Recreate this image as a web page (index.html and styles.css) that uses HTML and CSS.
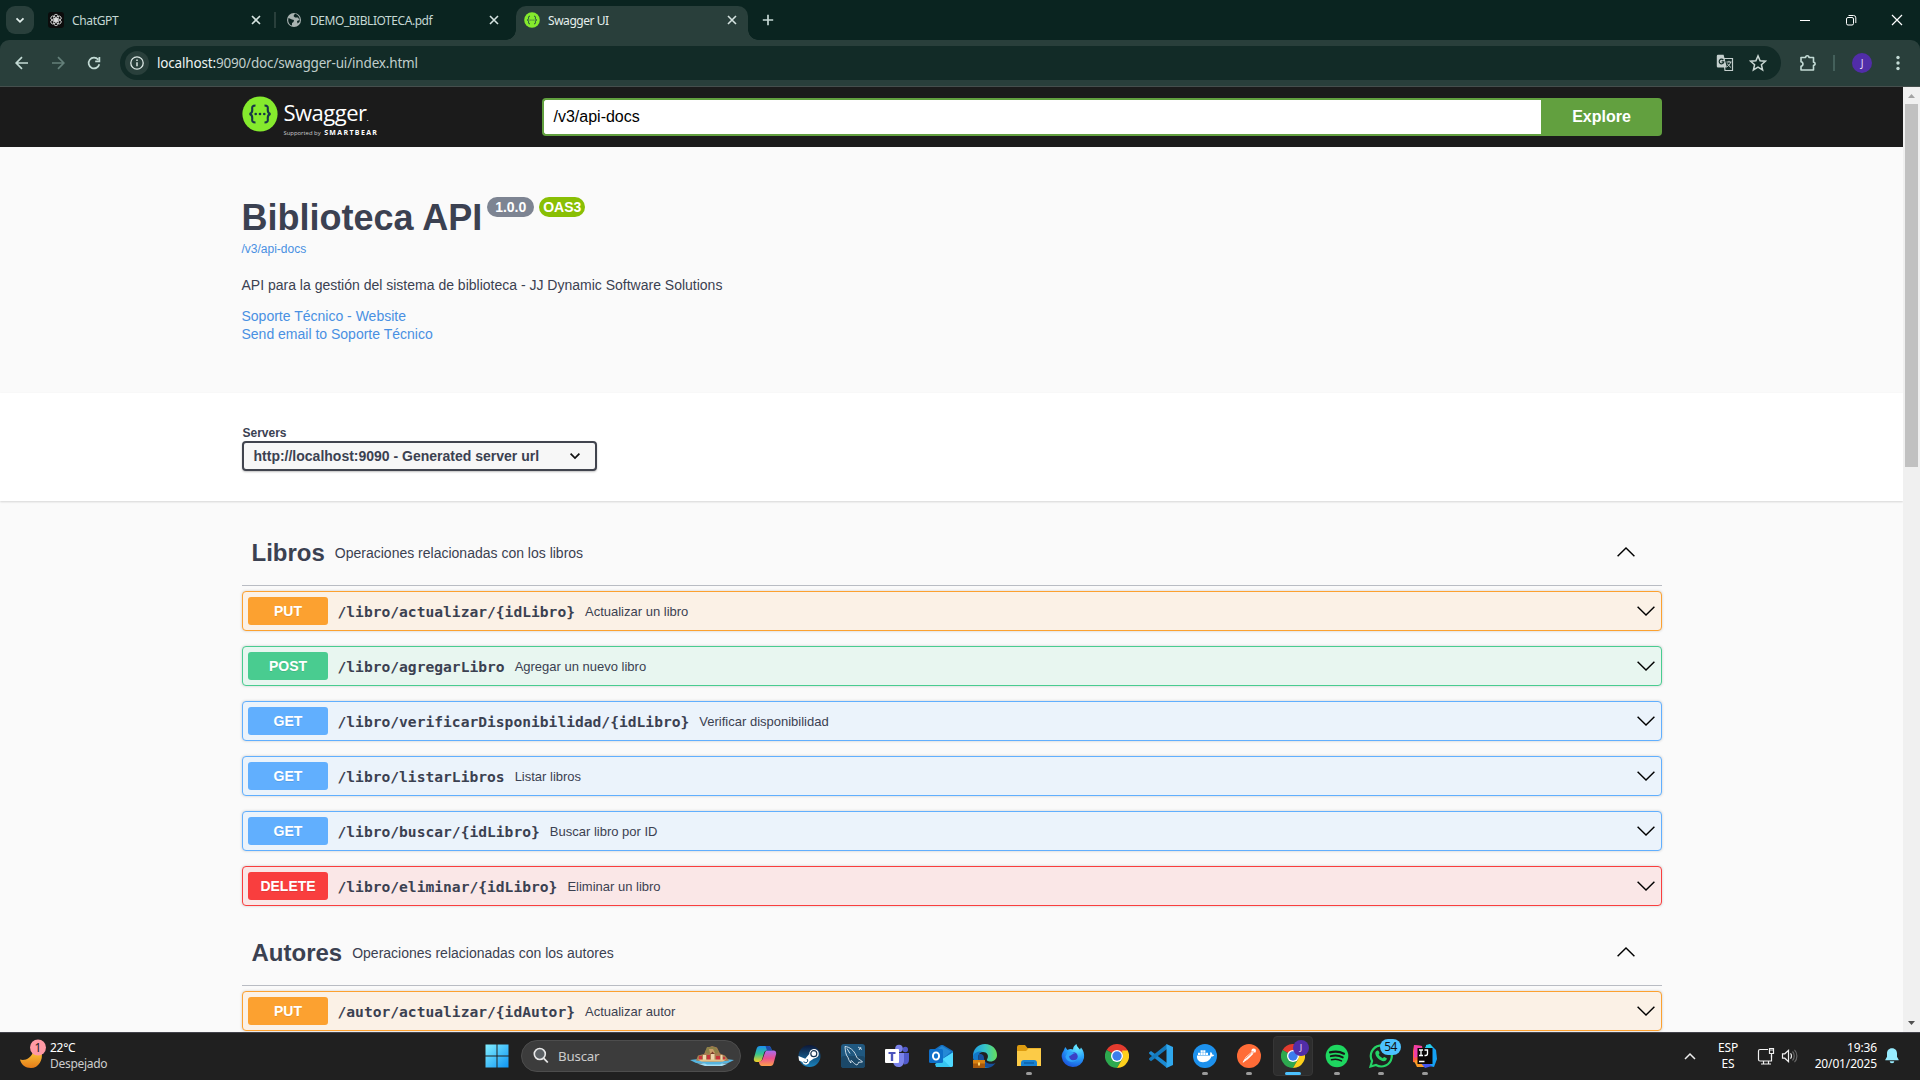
FILE: index.html
```html
<!DOCTYPE html>
<html lang="es">
<head>
<meta charset="utf-8">
<title>Swagger UI</title>
<link rel="stylesheet" href="styles.css">
</head>
<body>
<svg width="0" height="0" class="defs" aria-hidden="true">
  <defs>
    <symbol id="x" viewBox="0 0 10 10"><path d="M1 1l8 8M9 1l-8 8" stroke="currentColor" stroke-width="1.6" fill="none"/></symbol>
    <symbol id="down" viewBox="0 0 20 20"><path d="M1.600 5.800L10 14l8.400-8.200" stroke="#000" stroke-width="1.450" fill="none"/></symbol>
    <symbol id="up" viewBox="0 0 20 20"><path d="M1.600 14.200L10 6l8.400 8.200" stroke="#000" stroke-width="1.450" fill="none"/></symbol>
    <symbol id="swagger" viewBox="0 0 36 36">
      <circle cx="18" cy="18" r="17.600" fill="#85ea2d"/>
      <path d="M13.500 9.500c-3 0-3.500 1-3.300 3.500.3 3-.2 4.500-2.700 5 2.500.5 3 2 2.700 5-.2 2.500.3 3.500 3.300 3.500M22.500 9.500c3 0 3.500 1 3.300 3.500-.3 3 .2 4.500 2.700 5-2.500.5-3 2-2.700 5 .2 2.500-.3 3.500-3.300 3.500" fill="none" stroke="#173647" stroke-width="2.100"/>
      <g fill="#173647"><circle cx="13.700" cy="18" r="1.300"/><circle cx="18" cy="18" r="1.300"/><circle cx="22.300" cy="18" r="1.300"/></g>
    </symbol>
    <symbol id="chrome" viewBox="0 0 24 24">
      <path d="M12 12L1.600 6A12 12 0 0 1 22.400 6z" fill="#e33b2e"/>
      <path d="M1.600 6A12 12 0 0 0 12 24l5.200-9L12 12z" fill="#2da94f"/>
      <path d="M22.400 6A12 12 0 0 1 12 24l5.200-9V6z" fill="#fdd01c"/>
      <path d="M12 6.500h10.600L22.400 6 12 5z" fill="#e33b2e"/>
      <circle cx="12" cy="12" r="6" fill="#fff"/><circle cx="12" cy="12" r="4.700" fill="#3b7ded"/>
    </symbol>
  </defs>
</svg>

<header class="browser">
  <div class="tabstrip">
    <button class="tab-search"><svg width="10" height="10" viewBox="0 0 10 10"><path d="M1.500 3.300L5 6.800l3.500-3.500" stroke="#e2efec" stroke-width="1.800" fill="none"/></svg></button>
    <div class="tab tab-first">
      <svg class="favicon" viewBox="0 0 16 16"><rect width="16" height="16" rx="3" fill="#0c0c0c"/><g fill="none" stroke="#e8e8e8" stroke-width=".8"><ellipse cx="8" cy="5.600" rx="2.300" ry="3.400"/><ellipse cx="8" cy="5.600" rx="2.300" ry="3.400" transform="rotate(60 8 8)"/><ellipse cx="8" cy="5.600" rx="2.300" ry="3.400" transform="rotate(120 8 8)"/><ellipse cx="8" cy="5.600" rx="2.300" ry="3.400" transform="rotate(180 8 8)"/><ellipse cx="8" cy="5.600" rx="2.300" ry="3.400" transform="rotate(240 8 8)"/><ellipse cx="8" cy="5.600" rx="2.300" ry="3.400" transform="rotate(300 8 8)"/></g></svg>
      <span class="tab-title t1">ChatGPT</span>
      <svg class="close" width="10" height="10"><use href="#x"/></svg>
    </div>
    <div class="tab tab-second">
      <svg class="favicon" viewBox="0 0 16 16"><circle cx="8" cy="8" r="7" fill="#a9b3b1"/><path d="M2.500 6l3.500 1.500 2 .5-.5 2-1.500 1v2.500C3.500 13 1.500 10 2.500 6zM9 1.600L7.500 4l1.500 1.500h3L13.500 8 11 9l.5 2.500 2-1.500c1-3-.5-7-4.500-8.400z" fill="#0c2421"/></svg>
      <span class="tab-title t2">DEMO_BIBLIOTECA.pdf</span>
      <svg class="close" width="10" height="10"><use href="#x"/></svg>
    </div>
    <div class="tab active">
      <svg class="favicon"><use href="#swagger"/></svg>
      <span class="tab-title t3">Swagger UI</span>
      <svg class="close" width="10" height="10"><use href="#x"/></svg>
    </div>
    <svg class="new-tab" width="12" height="12" viewBox="0 0 12 12"><path d="M6 .8v10.400M.8 6h10.400" stroke="#c5d8d4" stroke-width="1.700"/></svg>
    <div class="window-controls">
      <svg width="12" height="12" viewBox="0 0 12 12"><path d="M1 6.500h10" stroke="#fff"/></svg>
      <svg width="12" height="12" viewBox="0 0 12 12"><g fill="none" stroke="#fff"><rect x="1.500" y="3.500" width="7" height="7.500" rx="1.500"/><path d="M3.500 1.500H8.500a2.300 2.300 0 0 1 2.300 2.300V9"/></g></svg>
      <svg width="12" height="12" viewBox="0 0 12 12"><path d="M1 1l10 10M11 1L1 11" stroke="#fff" stroke-width="1.200"/></svg>
    </div>
  </div>
  <div class="toolbar">
    <nav class="nav-buttons">
      <svg width="16" height="16" viewBox="0 0 16 16"><path d="M14 8H2.500M8 2.200L2.200 8 8 13.800" stroke="#c3dbd5" stroke-width="1.700" fill="none"/></svg>
      <svg width="16" height="16" viewBox="0 0 16 16"><path d="M2 8h11.500M8 2.200L13.800 8 8 13.800" stroke="#64807a" stroke-width="1.700" fill="none"/></svg>
      <svg width="16" height="16" viewBox="0 0 16 16"><path d="M13.300 9.200A5.400 5.400 0 1 1 12.200 4.600M13.400 2v4.300H9.200" stroke="#c3dbd5" stroke-width="1.700" fill="none"/></svg>
    </nav>
    <div class="omnibox">
      <span class="site-info"><svg width="16" height="16" viewBox="0 0 16 16"><circle cx="8" cy="8" r="6.200" fill="none" stroke="#dce8e5" stroke-width="1.300"/><path d="M8 7.200v4M8 4.600v1.400" stroke="#dce8e5" stroke-width="1.500"/></svg></span>
      <span class="url"><b>localhost:</b>9090/doc/swagger-ui/index.html</span>
      <svg class="translate" width="18" height="18" viewBox="0 0 18 18"><path d="M7.500 4.500h9v12H9z" fill="none" stroke="#c4cfcd" stroke-width="1.200"/><path d="M2 .8h5.600l3.300 12.600H2A1.200 1.200 0 0 1 .8 12.200V2A1.200 1.200 0 0 1 2 .8z" fill="#c4cfcd"/><path d="M7.300 6A2.300 2.300 0 1 0 7.800 7.800H5.600" fill="none" stroke="#122b27" stroke-width="1.200"/><path d="M10.500 8h5M13 6.800V8M14.700 8c-.5 2.300-2 3.700-3.500 4.700M11.300 9.500c.8 1.500 2 2.800 3.700 4" fill="none" stroke="#c4cfcd" stroke-width="1"/></svg>
      <svg width="18" height="18" viewBox="0 0 18 18"><path d="M9 1.900l2.100 4.900 5.300.4-4 3.500 1.200 5.200L9 13.100l-4.600 2.800 1.200-5.200-4-3.500 5.300-.4z" fill="none" stroke="#c9d6d3" stroke-width="1.500"/></svg>
    </div>
    <svg class="extensions" width="18" height="18" viewBox="0 0 18 18"><path d="M2 3.500h4.600a1.700 1.700 0 0 1 3.400 0h4.500v4.700a1.600 1.600 0 0 1 0 3.200V16H2v-3.600c2.600-.4 2.600-4.200 0-4.600z" fill="none" stroke="#c3dbd5" stroke-width="1.600" stroke-linejoin="round"/></svg>
    <i class="tool-sep"></i>
    <span class="avatar">J</span>
    <svg class="dots" width="4" height="16" viewBox="0 0 4 16"><g fill="#c3dbd5"><circle cx="2" cy="2.500" r="1.700"/><circle cx="2" cy="8" r="1.700"/><circle cx="2" cy="13.500" r="1.700"/></g></svg>
  </div>
</header>

<div class="viewport">
  <main class="page">
    <div class="topbar"><div class="wrapper">
      <div class="logo">
        <svg width="36" height="36"><use href="#swagger"/></svg>
        <div class="logo-text"><span class="brand">Swagger<small>.</small></span><span class="support">Supported by <b>SMARTBEAR</b></span></div>
      </div>
      <div class="download"><div class="download-input">/v3/api-docs</div><div class="explore">Explore</div></div>
    </div></div>

    <section class="info wrapper">
      <h2><span class="title">Biblioteca API</span><span class="badge version">1.0.0</span><span class="badge oas">OAS3</span></h2>
      <a class="spec">/v3/api-docs</a>
      <p>API para la gestión del sistema de biblioteca - JJ Dynamic Software Solutions</p>
      <div class="contact"><a>Soporte Técnico - Website</a><a>Send email to Soporte Técnico</a></div>
    </section>

    <section class="scheme"><div class="wrapper">
      <label>Servers</label>
      <div class="select"><span>http://localhost:9090 - Generated server url</span><svg width="12" height="12" viewBox="0 0 12 12"><path d="M1.600 3.700L6 8.100l4.400-4.400" stroke="#111" stroke-width="1.700" fill="none"/></svg></div>
    </div></section>

    <section class="operations wrapper">
      <div class="tag"><h3>Libros</h3><span>Operaciones relacionadas con los libros</span><svg width="20" height="20"><use href="#up"/></svg></div>
      <div class="op put"><b class="method">PUT</b><span class="path">/libro/actualizar/{idLibro}</span><span class="desc">Actualizar un libro</span><svg width="20" height="20"><use href="#down"/></svg></div>
      <div class="op post"><b class="method">POST</b><span class="path">/libro/agregarLibro</span><span class="desc">Agregar un nuevo libro</span><svg width="20" height="20"><use href="#down"/></svg></div>
      <div class="op get"><b class="method">GET</b><span class="path">/libro/verificarDisponibilidad/{idLibro}</span><span class="desc">Verificar disponibilidad</span><svg width="20" height="20"><use href="#down"/></svg></div>
      <div class="op get"><b class="method">GET</b><span class="path">/libro/listarLibros</span><span class="desc">Listar libros</span><svg width="20" height="20"><use href="#down"/></svg></div>
      <div class="op get"><b class="method">GET</b><span class="path">/libro/buscar/{idLibro}</span><span class="desc">Buscar libro por ID</span><svg width="20" height="20"><use href="#down"/></svg></div>
      <div class="op delete"><b class="method">DELETE</b><span class="path">/libro/eliminar/{idLibro}</span><span class="desc">Eliminar un libro</span><svg width="20" height="20"><use href="#down"/></svg></div>
      <div class="tag"><h3>Autores</h3><span>Operaciones relacionadas con los autores</span><svg width="20" height="20"><use href="#up"/></svg></div>
      <div class="op put"><b class="method">PUT</b><span class="path">/autor/actualizar/{idAutor}</span><span class="desc">Actualizar autor</span><svg width="20" height="20"><use href="#down"/></svg></div>
    </section>
  </main>
  <div class="scrollbar">
    <svg width="17" height="17" viewBox="0 0 17 17"><path d="M5 11l3.500-4 3.500 4z" fill="#a3a3a3"/></svg>
    <div class="thumb"></div>
    <svg class="arrow-down" width="17" height="17" viewBox="0 0 17 17"><path d="M5 6h7l-3.500 4z" fill="#505050"/></svg>
  </div>
</div>

<footer class="taskbar">
  <div class="weather">
    <svg width="30" height="32" viewBox="0 0 30 32"><defs><linearGradient id="moon" x1="0" y1="0" x2="0" y2="1"><stop offset="0" stop-color="#fbc53b"/><stop offset="1" stop-color="#e57c18"/></linearGradient></defs><path d="M4 20.500c5 1.500 11-1 13.500-8.500l8 1c2 8-3 16-10.500 16-5.500 0-10-3.500-11-8.500z" fill="url(#moon)"/><circle cx="22" cy="8.500" r="8" fill="#ff9aa5"/><text x="22" y="13" text-anchor="middle" class="badge-num">1</text></svg>
    <div><span>22°C</span><span class="dim">Despejado</span></div>
  </div>
  <div class="apps">
    <svg class="start" width="24" height="24" viewBox="0 0 24 24"><defs><linearGradient id="win" gradientUnits="userSpaceOnUse" x1="0" y1="0" x2="24" y2="24"><stop offset="0" stop-color="#84f0ff"/><stop offset="1" stop-color="#0b93f5"/></linearGradient></defs><path d="M.5.500h11v11H.5zM12.500.500h11v11h-11zM.5 12.500h11v11H.5zM12.500 12.500h11v11h-11z" fill="url(#win)"/></svg>
    <div class="search">
      <svg width="16" height="18" viewBox="0 0 16 18"><circle cx="6.800" cy="7" r="5.500" fill="#5b6064" stroke="#e8e8e8" stroke-width="1.600"/><path d="M10.800 11.300l4 4.200" stroke="#e8e8e8" stroke-width="1.800"/></svg>
      <span>Buscar</span>
      <svg class="island" width="46" height="22" viewBox="0 0 46 22"><path d="M1 15l8-1h28l8 1-6 3-5 .5-3 2H16l-3-2-6-.5z" fill="#56b4de"/><path d="M8 18.500h8l2 1h13l2-1h6l-6 2.500H16z" fill="#a5ddf2"/><path d="M7 15.500l2-5 6-1.500 3-6 5-2 5 1.500 3 6 5 2 4 5q-16 2.500-33 0z" fill="#a87c50"/><path d="M16 7l2-5h8l4 5-3 2-4-3-4 3z" fill="#8e8148"/><path d="M20 4l4 0 2 4h-5z" fill="#c99d68"/><path d="M10 11h3v4h-3zM18 10h3v5h-3zM27 11h4v4h-4zM34 12h2v3h-2z" fill="#c8343a"/><path d="M14 10h3v5h-3zM22 9h3.500v6H22zM31.500 10h2v5h-2z" fill="#f0d7ac"/><path d="M9 14.500h28l-3 2H12z" fill="#e4c38a"/><path d="M21.500 9l2-2.500 2 2.500z" fill="#7b3c2b"/></svg>
    </div>

    <div class="app"><svg viewBox="0 0 24 24"><defs><linearGradient id="cp1" x1="0" y1="0" x2="0" y2="1"><stop offset="0" stop-color="#1b8ef0"/><stop offset=".5" stop-color="#35c48d"/><stop offset="1" stop-color="#f6d022"/></linearGradient><linearGradient id="cp2" x1="0" y1="0" x2="0" y2="1"><stop offset="0" stop-color="#a66cf0"/><stop offset=".5" stop-color="#ea4f90"/><stop offset="1" stop-color="#fda04a"/></linearGradient></defs><path d="M7 2h8.500c1.500 0 2.300 1 2.700 2.500l.6 2H14c-1.800 0-2.500 1-3 2.500L9 15.500C8.500 17 7.500 18 6 18H3.500C1 18 .5 16 1 14L3.500 5C4 3 5.200 2 7 2z" fill="url(#cp1)"/><path d="M17.500 22H9c-1.500 0-2.300-1-2.700-2.500l-.5-2c2.200 0 3.300-1 3.900-2.500L12 8.500C12.500 7 13.500 6.500 15 6.500h5.500C23 6.500 23.500 8.500 23 10.500L20.700 19c-.5 2-1.500 3-3.200 3z" fill="url(#cp2)"/><path d="M12.500 2H15.500c1.500 0 2.300 1 2.700 2.500l.6 2H14z" fill="#1e49a8"/></svg></div>
    <div class="app"><svg viewBox="0 0 24 24"><defs><linearGradient id="st" x1="0" y1="0" x2="0" y2="1"><stop offset="0" stop-color="#0c1737"/><stop offset="1" stop-color="#1a83bd"/></linearGradient></defs><circle cx="12.500" cy="12" r="11" fill="url(#st)"/><path d="M1.500 12l6.800 2.800 3.900-4.800a4.800 4.800 0 1 1 4.700 4.500L12.500 17.500a3.700 3.700 0 0 1-7.200.5L2 16.500z" fill="#fff"/><circle cx="16.800" cy="9.700" r="3" fill="none" stroke="#17324f" stroke-width="1.200"/><path d="M6.500 17.800l2.300.9a2 2 0 0 0 1-3.700" fill="none" stroke="#17547d"/></svg></div>
    <div class="app"><svg viewBox="0 0 24 24"><rect width="24" height="24" rx="3" fill="#20587f"/><rect y="12" width="24" height="12" rx="3" fill="#1b4868"/><path d="M4 2.500c.5 5 .5 8 3 11 .8 2.500 1.500 4 3 5.500-.5-2.500 0-3 1-2 2 2.500 3.500 3.500 5 4M4 2.500c5 .5 9 4 11 9 .8 2.500 2 3.500 4.500 4.500l2 2-4 .3c-.5 1 0 1.500-1.500 2.700M17 3l4 2.500M18 6l2-3M6 4.500l3 5" fill="none" stroke="#dce9f2" stroke-width=".9"/></svg></div>
    <div class="app"><svg viewBox="0 0 24 24"><circle cx="20.300" cy="5.500" r="2.700" fill="#5059c9"/><circle cx="14" cy="4.500" r="3.800" fill="#7b83eb"/><path d="M17 9h7v7c0 3-2 4.500-5 4.500z" fill="#5059c9"/><path d="M8 9h11v8c0 4-2.500 6-5.500 6S8.500 21 8 18z" fill="#7b83eb"/><rect y="5" width="14" height="14" rx="1" fill="#fff"/><path d="M3.500 8h7v2H8.200v7H5.800v-7H3.500z" fill="#4b53bc"/></svg></div>
    <div class="app"><svg viewBox="0 0 24 24"><path d="M3 7l9-6h2l10 6v5L14 18 3 12z" fill="#1470c2"/><path d="M5 8l8-6 9 5.500-8 7z" fill="#2589d6"/><path d="M24 8.500V21q0 2-2 2H7l-1-3z" fill="#36c5f0"/><path d="M24 8.500L13.500 15l8 8h.5q2 0 2-2z" fill="#50d9ff"/><rect y="5" width="14" height="14" rx="1.500" fill="#0f6fc9"/><ellipse cx="7" cy="12" rx="3.100" ry="3.600" fill="none" stroke="#fff" stroke-width="1.900"/></svg></div>
    <div class="app"><svg viewBox="0 0 24 24"><defs><linearGradient id="ed" x1="0" y1="0" x2="1" y2="0"><stop offset="0" stop-color="#1f9be5"/><stop offset=".5" stop-color="#36c5c9"/><stop offset="1" stop-color="#66df5a"/></linearGradient></defs><path d="M0 12C0 5 5 0 12 0s12 5 12 11c0 4-3 6.500-6.500 6.500-2.800 0-4.300-1-3.300-2.500 2-3.500-.2-7-4.200-7C5 8 1 12 0 16z" fill="url(#ed)"/><path d="M0 12c1-3.500 5-5 9-4.500-3.500 1.500-4.300 5-3.300 8.500 1.500 5 7.500 8 12.300 6.500C14 25 8 24.500 4 21 1.500 18.500 0 15.500 0 12z" fill="#1378c9"/><path d="M6 10c-2 5 .5 12 8 13.500 4 .5 6.500-1.500 8.500-4.500-5 2-11 .5-11.500-4.500 0-2-.5-5-5-4.500z" fill="#17509b"/><rect y="16" width="12" height="8" fill="#d98212"/><path d="M0 19.500h12V24H0z" fill="#a8590b"/><path d="M5 18.500h2v3H5z" fill="#ffd76a"/></svg></div>
    <div class="app running"><svg viewBox="0 0 24 24"><path d="M0 3q0-2 2-2h6l2.500 3H24v6H0z" fill="#dd9b10"/><path d="M0 7h9l2.500-2.500H24V22H0z" fill="#fccb47"/><path d="M4 22v-3q0-3 3-3h10q3 0 3 3v3z" fill="#1983d2"/><path d="M7 19h10" stroke="#0c5fa7" stroke-width="1.500"/></svg></div>
    <div class="app"><svg viewBox="0 0 24 24"><defs><radialGradient id="ff" cx=".7" cy=".15" r=".95"><stop offset="0" stop-color="#6cecff"/><stop offset=".5" stop-color="#27a2fb"/><stop offset="1" stop-color="#1a4bd8"/></radialGradient></defs><path d="M2.500 7l1.700-4L6.500 6C9 4.500 11 5 12 5.500 12 3 13.500 1 15.500 0c.3 3 2.500 4 3.500 5.500l1-2c2.500 3 3.500 6 3 10.500A11.300 11.300 0 0 1 .7 13C.5 10 1.300 9 2.500 7z" fill="url(#ff)"/><circle cx="12.500" cy="12.500" r="4.200" fill="#3b3fc6"/><path d="M7 8c3-1.500 5 0 7 1.500-3 0-3 2-6 2.500-.5 4 4.500 5.500 8 3-1.500 4.500-11 3.500-11.500-2.500z" fill="#2fa5fa"/></svg></div>
    <div class="app"><svg viewBox="0 0 24 24"><use href="#chrome"/></svg></div>
    <div class="app"><svg viewBox="0 0 24 24"><path d="M0 8.500L2 7l16 12v5L.2 9.800z" fill="#1c8ad2"/><path d="M0 15.500L2 17.200 18 5V0L.2 14.300z" fill="#147abd"/><path d="M17.500 0L24 3v18l-6.500 3z" fill="#2fa8ee"/></svg></div>
    <div class="app running"><svg viewBox="0 0 24 24"><circle cx="12" cy="12" r="12" fill="#1d91ed"/><path d="M4 11.500h13c.3-1.500-.2-2.500.7-3.500 1.200.7 1.500 1.700 1.500 2.500 1 0 1.500.2 2 .5-.5 1.200-1.700 1.600-2.800 1.600-1.500 4-4.400 5.600-8.400 5.600C6 18.200 3.500 15.500 4 11.500z" fill="#fff"/><path d="M5 8.800h2.200V11H5zM7.600 8.800h2.200V11H7.600zM10.200 8.800h2.200V11h-2.200zM12.800 8.800H15V11h-2.200zM10.200 6.200h2.200v2.200h-2.200zM7.600 6.200h2.200v2.200H7.600z" fill="#fff"/></svg></div>
    <div class="app running"><svg viewBox="0 0 24 24"><circle cx="12" cy="12" r="12" fill="#ff6c37"/><circle cx="16.700" cy="6.700" r="2.300" fill="#fff"/><path d="M14.500 8.300l1.500 1.500-5 5-5 3.500 3-5z" fill="#fff" stroke="#fff" stroke-width=".7"/><path d="M8.500 14.500l6-5.500M15.500 7.500l2 1" stroke="#ff6c37" stroke-width=".8"/></svg></div>
    <div class="app current"><svg viewBox="0 0 24 24"><use href="#chrome"/></svg><i class="profile">J</i></div>
    <div class="app running"><svg viewBox="0 0 24 24"><circle cx="12" cy="12" r="11.300" fill="#1ed760"/><g fill="none" stroke="#171717" stroke-linecap="round"><path d="M5 8.400c5-1.400 10-.9 14 1.300" stroke-width="2.200"/><path d="M5.800 12.200c4.500-1.200 8.500-.7 12 1.200" stroke-width="1.900"/><path d="M6.500 15.800c3.500-.9 7-.6 10 1.100" stroke-width="1.500"/></g></svg></div>
    <div class="app running"><svg viewBox="0 0 24 24"><path d="M1.500 22.500l1.600-5.500A10.500 10.500 0 1 1 7 21z" fill="none" stroke="#25d366" stroke-width="2.200"/><path d="M8.300 6.500c1-.3 1.300 0 2.300 2.600-.2 1-1 1.200-.8 1.700 1 1.800 2.300 2.700 4 3.400.7-.6 1-1.300 1.500-1.200l2.500 1.300c.2 2-1.500 3-3 3-4-.3-8.300-4.500-8.500-8 0-1.300.8-2.500 2-2.800z" fill="#25d366"/></svg><i class="count">54</i></div>
    <div class="app running"><svg viewBox="0 0 24 24"><path d="M0 7l1-6 8 1 2 10-6 7-5-1z" fill="#fd5d41"/><path d="M1 1l8 1-2 10-6 2z" fill="#ef3da8"/><path d="M12 3l5-3 6 6 1 9-3 8-9-2z" fill="#15a1f4"/><path d="M1 17l6-2 6 8-9 0z" fill="#f99a25"/><path d="M7 18l5-2 7 6-7 2z" fill="#4657f2"/><path d="M13 1l4-1 3 4h-7z" fill="#28cfe5"/><path d="M4.500 4h15v16h-15z" fill="#0b0606"/><path d="M6 6h4M8 6v5.500M6 11.500h4M11.500 6h3v3.500q0 2-1.800 2H11.500M6 17.500h5.500" stroke="#fff" stroke-width="1.300" fill="none"/></svg></div>
  </div>
  <div class="tray">
    <svg class="tray-up" width="12" height="8" viewBox="0 0 12 8"><path d="M1 7l5-5 5 5" stroke="#eee" stroke-width="1.500" fill="none"/></svg>
    <div class="lang"><span>ESP</span><span>ES</span></div>
    <svg class="net" width="18" height="18" viewBox="0 0 18 18"><g fill="none" stroke="#f0f0f0" stroke-width="1.200"><path d="M11 2.500H3Q1.500 2.500 1.500 4v8.500Q1.500 14 3 14h11.500V8M6.500 14v3M11.500 14v3M4 17h10"/><path d="M12.500 1.500h4v5h-4zM14.500 6.500v4M12.500 3h4"/></g></svg>
    <svg class="vol" width="18" height="16" viewBox="0 0 18 16"><g fill="none" stroke="#f0f0f0" stroke-width="1.200"><path d="M1.500 5.800h2.300L7.500 2.300v11.400L3.800 10.200H1.500zM9.500 5.300c1.300 1.300 1.300 4 0 5.400"/><path d="M11.500 3.500c2.300 2.300 2.300 6.700 0 9M13.500 1.800c3.200 3.200 3.200 9.200 0 12.400" stroke="#666"/></g></svg>
    <div class="clock"><span>19:36</span><span>20/01/2025</span></div>
    <svg width="14" height="16" viewBox="0 0 14 16"><path d="M7 .3c3.300 0 5 2.300 5 5.200v3.200l1.700 3v.6H.3v-.6l1.700-3V5.500C2 2.600 3.700.3 7 .3zM4.700 13.300h4.600a2.300 2 0 0 1-4.600 0z" fill="#98ecfe"/></svg>
  </div>
</footer>
</body>
</html>
```
FILE: styles.css
```css
* { box-sizing: border-box; }
body {
  margin: 0; width: 1920px; height: 1080px; overflow: hidden;
  display: flex; flex-direction: column;
  font-family: "Liberation Sans", Arial, sans-serif; color: #3b4151;
}
svg { display: block; flex: none; }
.defs { position: absolute; }
h2, h3, p { margin: 0; }

/* browser chrome */
.browser { height: 87px; flex: none; background: #0a2420; font-family: "Noto Sans", "Open Sans", sans-serif; border-bottom: 1px solid #454f4d; }
.tabstrip { height: 40px; display: flex; align-items: center; padding-left: 6px; }
.tab-search { width: 28px; height: 28px; padding: 0; border: 0; border-radius: 9px; background: #293f3b; display: grid; place-items: center; }
.tab { display: flex; align-items: center; height: 28px; color: #c5d8d4; font-size: 12px; }
.tab-first { width: 242px; padding: 0 13px 0 14px; border-right: 2px solid #293f3b; height: 16px; }
.tab-second { width: 240px; padding: 0 17px 0 10px; }
.active { position: relative; align-self: flex-end; width: 232px; height: 34px; padding: 0 11px 6px 8px; background: #293f3b; border-radius: 10px 10px 0 0; color: #e6efed; }
.active::before, .active::after { content: ""; position: absolute; bottom: 0; width: 10px; height: 10px; }
.active::before { left: -10px; background: radial-gradient(circle at 0 0, transparent 9.500px, #293f3b 10px); }
.active::after { right: -10px; background: radial-gradient(circle at 100% 0, transparent 9.500px, #293f3b 10px); }
.favicon { width: 16px; height: 16px; margin-right: 8px; }
.tab-title { white-space: nowrap; }
.t1 { letter-spacing: -.35px; }
.t2 { letter-spacing: -.45px; }
.t3 { letter-spacing: -.45px; }
.close { margin-left: auto; color: #d5e3e0; }
.new-tab { margin-left: 14px; }
.window-controls { margin-left: auto; display: flex; gap: 34px; padding-right: 17px; }
.toolbar { height: 46px; display: flex; align-items: center; background: #293f3b; border-radius: 9px 9px 0 0; padding: 0 20px 0 14px; }
.nav-buttons { display: flex; gap: 20px; width: 106px; }
.omnibox { width: 1662px; height: 34px; border-radius: 17px; background: #122b27; display: flex; align-items: center; padding: 0 14px 0 5px; }
.site-info { width: 24px; height: 24px; border-radius: 50%; background: #293f3b; display: grid; place-items: center; }
.url { margin-left: 8px; font-size: 13.500px; color: #c0cecb; letter-spacing: -.17px; }
.url b { font-weight: 400; color: #edf3f2; }
.translate { margin-left: auto; margin-right: 15px; }
.extensions { margin-left: 18px; }
.tool-sep { width: 2px; height: 16px; background: #44605b; margin: 0 17px 0 16px; }
.avatar { width: 20px; height: 20px; border-radius: 50%; background: #512da8; color: #e8def8; font-size: 10px; line-height: 20px; text-align: center; margin-right: 24px; }

/* page */
.viewport { height: 945px; flex: none; display: flex; }
.page { width: 1903px; height: 945px; overflow: hidden; background: #fafafa; }
.wrapper { width: 1460px; margin: 0 auto; padding: 0 20px; }
.topbar { height: 60px; background: #1b1b1b; }
.topbar .wrapper { display: flex; height: 60px; align-items: center; }
.logo { width: 300px; height: 60px; display: flex; padding-top: 10px; gap: 6px; color: #fff; }
.logo svg { margin-top: -1px; }
.logo-text { display: flex; flex-direction: column; font-family: "Open Sans", sans-serif; }
.brand { font-size: 22px; line-height: 30px; height: 30px; letter-spacing: -.5px; }
.brand small { font-size: 8px; }
.support { font-size: 5.900px; line-height: 8px; margin-top: -1px; padding-top: 3px; white-space: nowrap; color: #ccc; }
.support b { font-size: 7px; letter-spacing: 1.350px; color: #fff; margin-left: 2px; }
.download { flex: 1; display: flex; height: 38px; font-size: 16px; }
.download-input { flex: 1; border: 2px solid #62a03f; border-right: 0; border-radius: 4px 0 0 4px; background: #fff; color: #000; line-height: 33px; padding-left: 10px; }
.explore { width: 121px; border-radius: 0 4px 4px 0; background: #62a03f; color: #fff; font-weight: 700; text-align: center; line-height: 38px; padding-left: 1px; }

.info { height: 246px; padding-top: 50px; }
.info h2 { display: flex; height: 41px; font-size: 36px; line-height: 41px; }
.badge { height: 20px; border-radius: 10px; color: #fff; font-size: 14px; line-height: 20px; text-align: center; }
.version { width: 47px; margin-left: 5px; background: #7d8492; }
.oas { width: 46px; margin-left: 5px; background: #89bf04; }
.info a { display: block; color: #4990e2; font-size: 14px; line-height: 18px; }
.info .spec { font-size: 12px; line-height: 14px; margin-top: 4px; }
.info p { font-size: 14px; line-height: 16px; margin: 21px 0 14px; }

.scheme { height: 108px; padding-top: 33px; background: #fff; box-shadow: 0 1px 2px rgba(0, 0, 0, .15); position: relative; }
.scheme label { display: block; font-size: 12px; font-weight: 700; line-height: 15px; padding-left: 1px; }
.select { width: 355px; height: 30px; border: 2px solid #41444e; border-radius: 4px; background: #f7f7f7; box-shadow: 0 1px 2px rgba(0, 0, 0, .25); display: flex; align-items: center; justify-content: space-between; padding: 0 14px 0 10px; font-size: 14px; font-weight: 700; line-height: 24px; }

.operations { padding-top: 20px; }
.tag { height: 65px; border-bottom: 1px solid #b9bcc3; display: flex; align-items: center; padding: 0 26px 0 10px; margin-bottom: 5px; font-size: 14px; }
.tag h3 { font-size: 24px; line-height: 28px; margin-right: 10px; }
.tag svg { margin-left: auto; margin-top: -3px; }
.op { height: 40px; border: 1px solid; border-radius: 4px; box-shadow: 0 0 3px rgba(0, 0, 0, .19); display: flex; align-items: center; padding: 5px; margin-bottom: 15px; }
.op svg { margin-left: auto; }
.method { width: 80px; height: 28px; border-radius: 3px; color: #fff; font-size: 14px; line-height: 28px; text-align: center; text-shadow: 0 1px 0 rgba(0, 0, 0, .1); padding-left: 1px; }
.path { padding: 2px 10px 0; font: 700 14.620px/20px "DejaVu Sans Mono", monospace; }
.desc { font-size: 13px; }
.put { border-color: #fca130; background: #fbf1e6; }
.put .method { background: #fca130; }
.post { border-color: #49cc90; background: #e8f6f0; }
.post .method { background: #49cc90; }
.get { border-color: #61affe; background: #ebf3fb; }
.get .method { background: #61affe; }
.delete { border-color: #f93e3e; background: #fae7e7; }
.delete .method { background: #f93e3e; }

.scrollbar { width: 17px; background: #f0f0f0; display: flex; flex-direction: column; align-items: center; }
.thumb { width: 13px; height: 363px; background: #c1c1c1; }
.arrow-down { margin-top: auto; }

/* taskbar */
.taskbar { height: 48px; flex: none; background: #202020; border-top: 1px solid #42424a; display: flex; align-items: center; padding-bottom: 1px; font-family: "Noto Sans", "Open Sans", sans-serif; font-size: 12px; color: #fff; line-height: 16px; }
.weather { width: 485px; display: flex; padding-left: 16px; gap: 4px; }
.weather > div, .lang, .clock { display: flex; flex-direction: column; }
.weather svg { margin-top: -1px; }
.weather span { letter-spacing: -.3px; }
.clock span { letter-spacing: -.15px; }
.dim { color: #ccc; }
.badge-num { font-size: 12px; fill: #222; }
.apps { display: flex; align-items: center; }
.start { margin-right: 12px; }
.search { width: 220px; height: 32px; border-radius: 16px; background: #3c3c3c; border: 1px solid #4d4d4d; display: flex; align-items: center; padding: 0 5px 0 11px; font-size: 13.300px; color: #ccc; margin-right: 4px; }
.search span { margin-left: 9px; letter-spacing: -.2px; }
.island { margin-left: auto; }
.app { position: relative; width: 40px; height: 40px; margin-right: 4px; border-radius: 4px; display: grid; place-items: center; }
.app > svg { width: 24px; height: 24px; }
.running::after, .current::after { content: ""; position: absolute; bottom: 1px; left: 17px; width: 6px; height: 3px; border-radius: 2px; background: #9a9a9a; }
.current { background: #2d2d2d; border: 1px solid #363636; }
.current::after { left: 11px; width: 16px; bottom: 0; background: #4cc2ff; }
.profile, .count { position: absolute; font-style: normal; text-align: center; }
.profile { right: 3px; top: 3px; width: 16px; height: 16px; border-radius: 50%; background: #512da8; color: #e8def8; font-size: 9px; line-height: 16px; }
.count { left: 19px; top: 3px; width: 21px; height: 16px; border-radius: 8px; background: #4cc2ff; color: #111; line-height: 16px; letter-spacing: -.5px; }
.tray { margin-left: auto; display: flex; align-items: center; padding-right: 21px; }
.tray-up { margin-right: 21px; }
.lang { width: 22px; align-items: center; margin-right: 18px; letter-spacing: -.2px; }
.net { margin-right: 6px; }
.clock { width: 78px; align-items: flex-end; margin-right: 8px; }
```
